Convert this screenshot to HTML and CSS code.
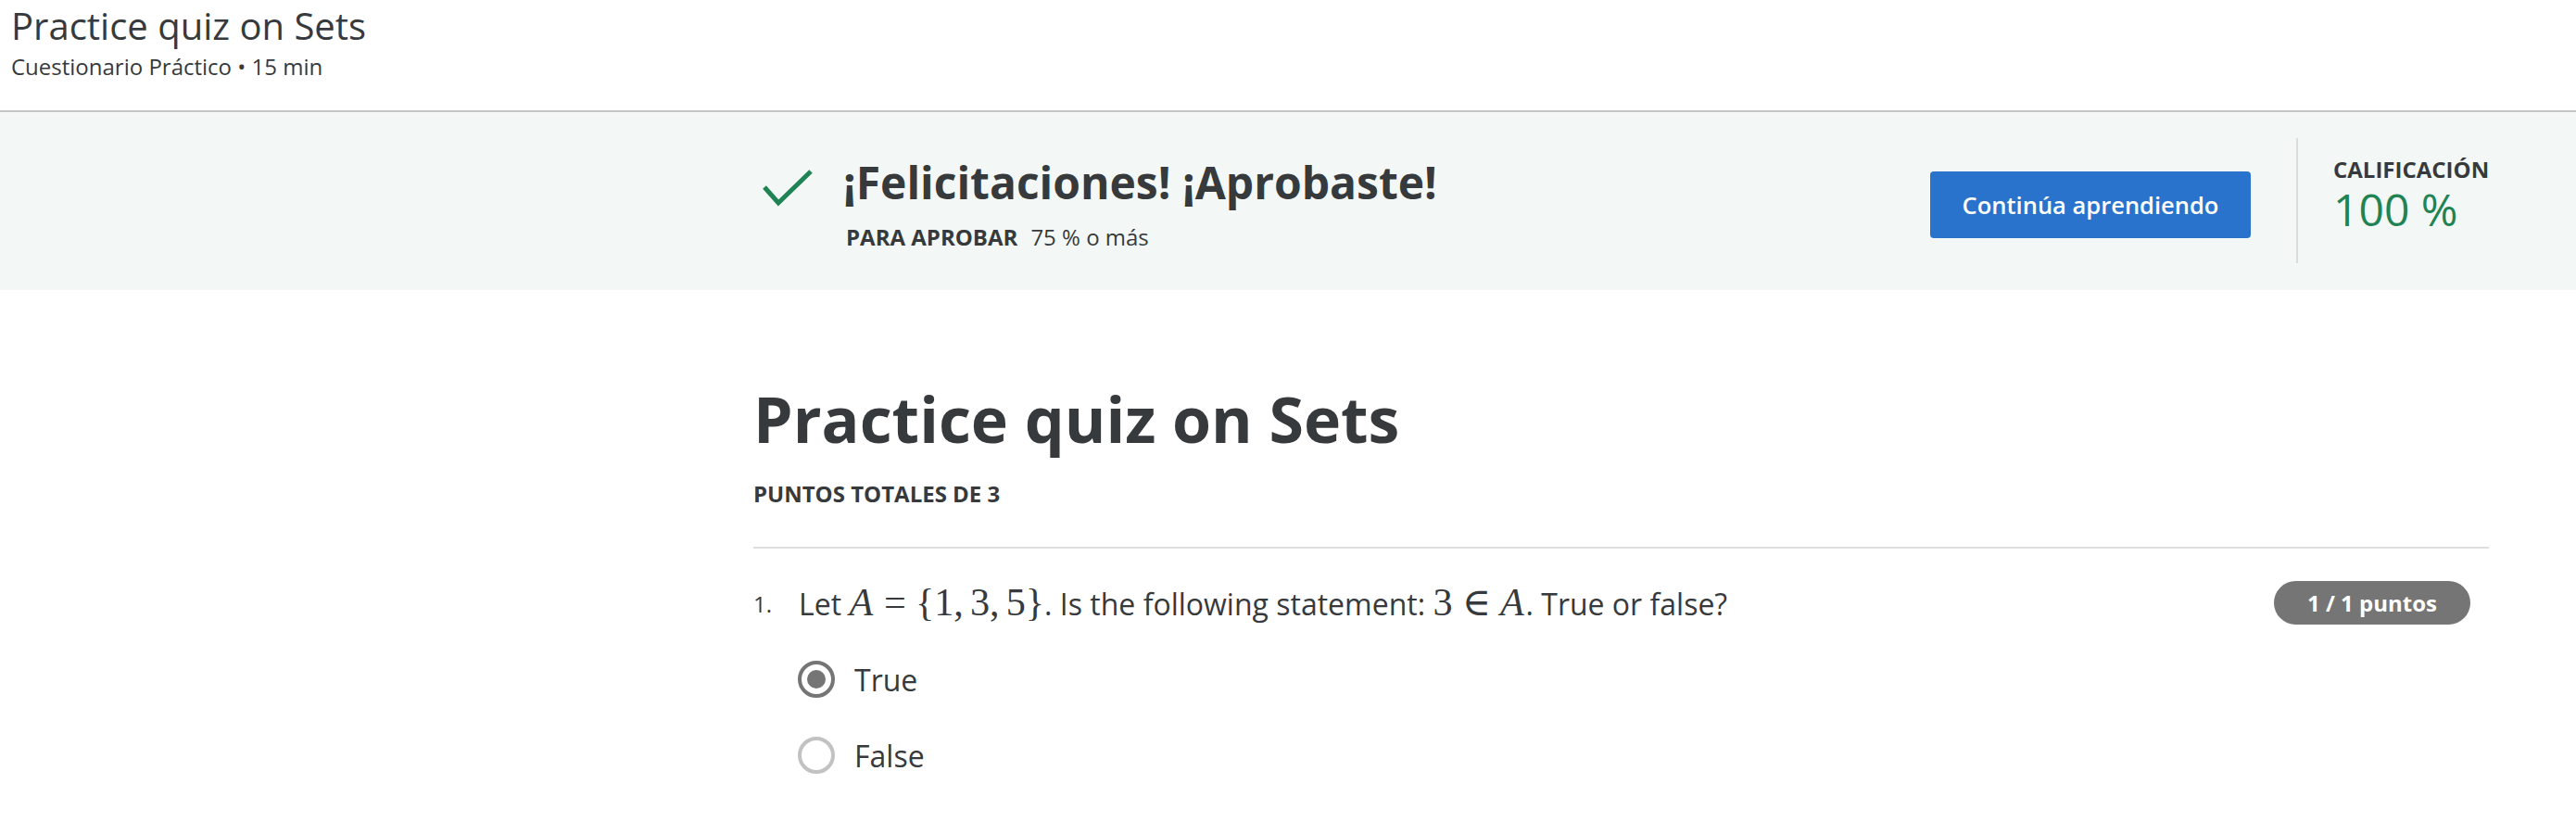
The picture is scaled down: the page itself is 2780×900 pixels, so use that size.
FILE: index.html
```html
<!DOCTYPE html>
<html lang="es">
<head>
<meta charset="utf-8">
<title>Practice quiz on Sets</title>
<link rel="stylesheet" href="styles.css">
</head>
<body>
<header class="top">
  <h1 class="top-title">Practice quiz on Sets</h1>
  <div class="top-sub">Cuestionario Práctico • 15 min</div>
</header>
<section class="banner">
  <div class="banner-inner">
    <div class="result">
      <svg class="check" viewBox="0 0 60 48" width="60" height="48" aria-hidden="true">
        <polyline points="5,23 20,40 55,6" fill="none" stroke="#1f8354" stroke-width="5"/>
      </svg>
      <div class="result-text">
        <h2 class="result-title">¡Felicitaciones! ¡Aprobaste!</h2>
        <div class="pass"><span class="pass-label">PARA APROBAR</span>75 % o más</div>
      </div>
    </div>
    <button class="continue" type="button">Continúa aprendiendo</button>
    <div class="grade">
      <div class="grade-label">CALIFICACIÓN</div>
      <div class="grade-value">100 %</div>
    </div>
  </div>
</section>
<main class="content">
  <h1 class="quiz-title">Practice quiz on Sets</h1>
  <div class="total">PUNTOS TOTALES DE 3</div>
  <div class="divider"></div>
  <div class="question">
    <span class="qnum">1.</span>
    <div class="qbody">
      <div class="qtext">Let <span class="math"><i>A</i><span class="rel">=</span>{1<span class="punct">,</span>3<span class="punct">,</span>5}</span>. Is the following statement: <span class="math">3<span class="rel">∈</span><i>A</i></span>. True or false?</div>
      <div class="options">
        <label class="option"><span class="radio checked"></span><span class="opt-text">True</span></label>
        <label class="option"><span class="radio"></span><span class="opt-text">False</span></label>
      </div>
    </div>
    <span class="badge">1 / 1 puntos</span>
  </div>
</main>
</body>
</html>
```
FILE: styles.css
```css
* { box-sizing: border-box; }
html, body { margin: 0; padding: 0; background: #ffffff; }
body {
  font-family: "Open Sans", "Liberation Sans", sans-serif;
  color: #373a3c;
  width: 2780px;
}
.top {
  padding: 0 0 31px 12px;
  border-bottom: 2px solid #c6c6c6;
}
.top-title {
  margin: 0;
  font-size: 40px;
  font-weight: 400;
  line-height: normal;
  color: #373a3c;
}
.top-sub {
  font-size: 24px;
  line-height: normal;
  color: #373a3c;
}
.banner {
  background: #f3f8f6;
  height: 192px;
}
.banner-inner {
  margin-left: 813px;
  width: 1873px;
  height: 100%;
  display: flex;
  align-items: center;
}
.result {
  flex: 1;
  display: flex;
  align-items: flex-start;
}
.check {
  display: block;
  margin-left: 7px;
  margin-top: 15px;
  margin-right: 30px;
  flex: none;
}
.result-title {
  margin: 0;
  font-size: 48px;
  font-weight: 700;
  line-height: normal;
  color: #373a3c;
}
.pass {
  margin-top: 12px;
  margin-left: 3px;
  font-size: 24px;
  line-height: 30px;
  color: #373a3c;
}
.pass-label {
  font-weight: 700;
  margin-right: 14px;
}
.continue {
  width: 346px;
  height: 72px;
  border: none;
  border-radius: 4px;
  background: #2a73cc;
  color: #ffffff;
  font-family: "Open Sans", "Liberation Sans", sans-serif;
  font-size: 25.5px;
  font-weight: 600;
  margin-right: 49px;
  margin-top: 8px;
  padding: 0;
}
.grade {
  align-self: stretch;
  margin: 28px 0 29px;
  border-left: 2px solid #dcdcdc;
  padding-left: 38px;
  width: 208px;
  padding-top: 18px;
}
.grade-label {
  font-size: 24px;
  font-weight: 700;
  line-height: 32px;
  color: #373a3c;
}
.grade-value {
  font-size: 48px;
  line-height: 54px;
  color: #1f8354;
}
.content {
  margin-left: 813px;
  width: 1873px;
  padding-top: 92px;
}
.quiz-title {
  margin: 0;
  font-size: 68px;
  font-weight: 700;
  line-height: normal;
  color: #373a3c;
}
.total {
  margin-top: 18px;
  font-size: 24px;
  font-weight: 700;
  line-height: normal;
}
.divider {
  margin-top: 41px;
  height: 2px;
  background: #dedede;
}
.question {
  display: flex;
  align-items: flex-start;
  margin-top: 36px;
}
.qnum {
  width: 49px;
  flex: none;
  font-size: 24px;
  line-height: 48px;
}
.qbody { flex: 1; }
.qtext {
  font-size: 32px;
  line-height: 48px;
}
.math {
  font-family: "Liberation Serif", "DejaVu Serif", serif;
  font-size: 1.32em;
  line-height: 1;
}
.math i { font-style: italic; margin-right: 0.04em; }
.rel { margin: 0 0.24em; }
.punct { margin-right: 0.167em; }
.options {
  margin-top: 27px;
  display: flex;
  flex-direction: column;
  gap: 22px;
}
.option {
  display: flex;
  align-items: center;
  height: 60px;
}
.radio {
  width: 40px;
  height: 40px;
  border-radius: 50%;
  border: 4px solid #c2c2c2;
  display: flex;
  align-items: center;
  justify-content: center;
  margin-left: -1px;
  margin-right: 21px;
  flex: none;
}
.radio.checked { border-color: #757575; }
.radio.checked::after {
  content: "";
  width: 20px;
  height: 20px;
  border-radius: 50%;
  background: #757575;
}
.opt-text {
  font-size: 32px;
  color: #373a3c;
}
.badge {
  flex: none;
  margin-top: -1px;
  margin-right: 20px;
  width: 212px;
  height: 47px;
  border-radius: 24px;
  background: #757575;
  color: #ffffff;
  font-size: 24px;
  font-weight: 700;
  display: flex;
  align-items: center;
  justify-content: center;
}
```
